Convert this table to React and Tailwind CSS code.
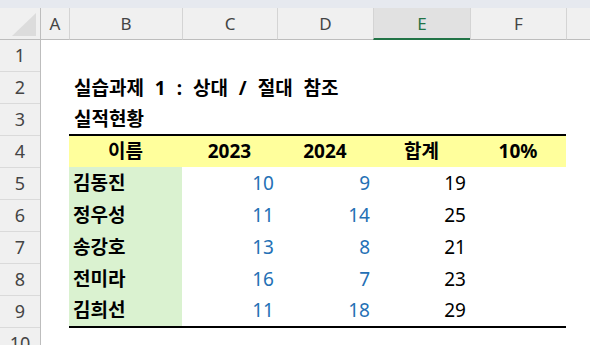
import React from "react";

const FONT = { fontFamily: '"Noto Sans", "Noto Sans CJK KR", sans-serif' };
const HFONT = { fontFamily: '"Noto Sans", "Liberation Sans", sans-serif' };

const data = [
  ["김동진", 10, 9, 19],
  ["정우성", 11, 14, 25],
  ["송강호", 13, 8, 21],
  ["전미라", 16, 7, 23],
  ["김희선", 11, 18, 29],
];

function ColHead({ w, label, selected }) {
  return (
    <div
      className={
        w +
        " h-full flex items-center justify-center border-l border-[#d4d4d4] text-[17px] " +
        (selected
          ? "bg-[#e1e1e1] text-[#217346] border-b-2 border-b-[#217346]"
          : "text-[#444444] border-b border-b-[#bdbdbd]")
      }
    >
      <span className="pt-[1px]">{label}</span>
    </div>
  );
}

function RowHead({ n }) {
  return (
    <div className="h-[32px] shrink-0 flex items-center justify-center border-b border-[#dadada] text-[18px] text-[#444444]">
      {n}
    </div>
  );
}

export default function App() {
  return (
    <div className="w-[590px] h-[345px] overflow-hidden bg-white flex flex-col" style={FONT}>
      <div className="h-[8px] shrink-0 bg-[#e6e9ef]" />
      {/* column header */}
      <div className="h-[32px] shrink-0 flex bg-[#f0f0f0]" style={HFONT}>
        <div className="w-[41px] h-full shrink-0 border-r border-[#bdbdbd] border-b border-b-[#bdbdbd] flex items-end justify-end pr-[3px] pb-[2px]">
          <svg width="25" height="24" viewBox="0 0 25 24">
            <polygon points="24,0 24,23 0,23" fill="#dcdcdc" />
          </svg>
        </div>
        <div className="w-[28px] h-full shrink-0 flex items-center justify-center text-[17px] text-[#444444] border-b border-b-[#bdbdbd]">
          <span className="pt-[1px]">A</span>
        </div>
        <ColHead w="w-[113px] shrink-0" label="B" />
        <ColHead w="w-[95px] shrink-0" label="C" />
        <ColHead w="w-[96px] shrink-0" label="D" />
        <ColHead w="w-[97px] shrink-0" label="E" selected />
        <ColHead w="w-[96px] shrink-0" label="F" />
        <ColHead w="flex-1" label="" />
      </div>
      {/* body */}
      <div className="flex flex-1 min-h-0">
        <div className="w-[41px] shrink-0 border-r border-[#bdbdbd] bg-[#f0f0f0] flex flex-col overflow-hidden" style={HFONT}>
          {[1, 2, 3, 4, 5, 6, 7, 8, 9, 10].map((n) => (
            <RowHead key={n} n={n} />
          ))}
        </div>
        <div className="flex-1 flex flex-col text-[19px] text-black">
          <div className="h-[32px] shrink-0" />
          <div className="h-[32px] shrink-0 flex items-center pl-[33px] font-bold whitespace-pre [word-spacing:6px]">
            실습과제 1 : 상대 / 절대 참조
          </div>
          <div className="h-[30px] shrink-0 flex items-center pl-[33px] font-bold">실적현황</div>
          <div className="h-[33px] shrink-0 flex">
            <div className="w-[28px] shrink-0" />
            <div className="flex border-t-2 border-black bg-[#ffff9c] font-bold">
              <div className="w-[113px] flex items-center justify-center">이름</div>
              <div className="w-[95px] flex items-center justify-center">2023</div>
              <div className="w-[96px] flex items-center justify-center">2024</div>
              <div className="w-[97px] flex items-center justify-center">합계</div>
              <div className="w-[96px] flex items-center justify-center">10%</div>
            </div>
          </div>
          {data.map((r, i) => {
            const last = i === data.length - 1;
            return (
              <div key={r[0]} className={(last ? "h-[33px]" : "h-[32px]") + " shrink-0 flex"}>
                <div className="w-[28px] shrink-0" />
                <div className={"flex " + (last ? "border-b-2 border-black" : "")}>
                  <div className="w-[113px] bg-[#daf2d0] flex items-center pl-[4px] font-bold">{r[0]}</div>
                  <div className="w-[95px] flex items-center justify-end pr-[3px] text-[#2470b5]">{r[1]}</div>
                  <div className="w-[96px] flex items-center justify-end pr-[3px] text-[#2470b5]">{r[2]}</div>
                  <div className="w-[97px] flex items-center justify-end pr-[4px]">{r[3]}</div>
                  <div className="w-[96px]" />
                </div>
              </div>
            );
          })}
        </div>
      </div>
    </div>
  );
}
